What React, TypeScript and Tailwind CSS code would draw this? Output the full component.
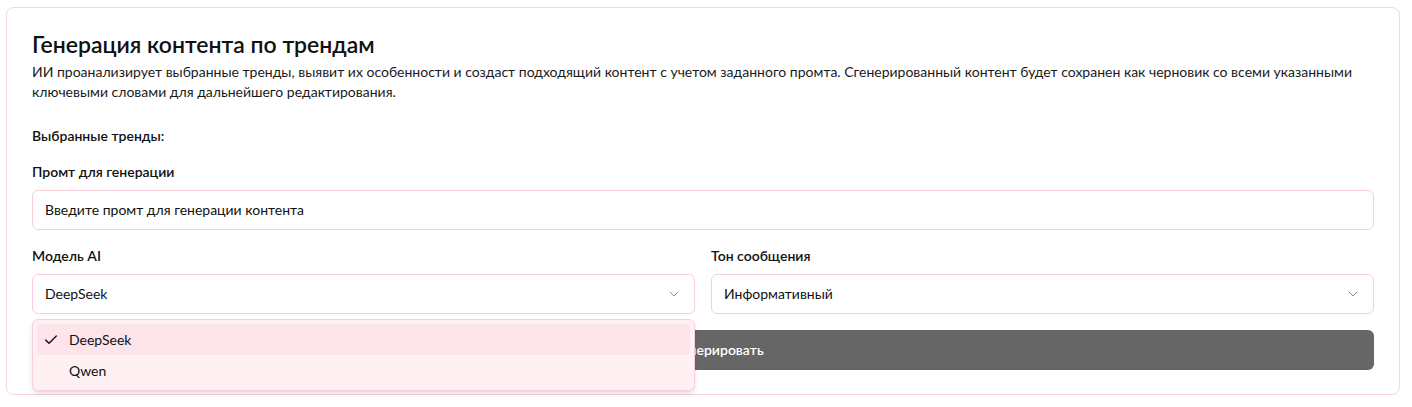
import { Check, ChevronDown, Sparkles } from 'lucide-react';

const font = { fontFamily: 'Lato, "Noto Sans", sans-serif' };

function Field({ label, children }: { label: string; children: React.ReactNode }) {
    return (
        <div className="flex flex-col gap-2">
            <div className="text-sm leading-5 font-semibold text-[#111]">{label}</div>
            {children}
        </div>
    );
}

function SelectBox({ value }: { value: string }) {
    return (
        <div className="flex h-10 items-center justify-between rounded-md border border-[#f9cfdc] bg-white px-3 text-sm text-[#111]">
            <span>{value}</span>
            <ChevronDown className="h-4 w-4 text-[#8a8a8a]" strokeWidth={1.5} />
        </div>
    );
}

export default function App() {
    return (
        <div className="min-h-screen bg-white pl-[6px] pt-[7px]" style={font}>
            <div className="w-[1394px] rounded-lg border border-[#f9d3df] bg-white px-[25px] pt-6 pb-6">
                <h2 className="mb-1.5 text-[23px] leading-6 font-semibold text-[#111]">Генерация контента по трендам</h2>
                <p className="text-sm leading-5 text-[#1a1a1a]">
                    ИИ проанализирует выбранные тренды, выявит их особенности и создаст подходящий контент с учетом заданного промта. Сгенерированный контент будет сохранен как черновик со всеми указанными ключевыми словами для дальнейшего редактирования.
                </p>

                <div className="mt-6 flex flex-col gap-4">
                    <div className="text-sm leading-5 font-semibold text-[#111]">Выбранные тренды:</div>

                    <Field label="Промт для генерации">
                        <div className="flex h-10 items-center rounded-md border border-[#f9cfdc] bg-white px-3 text-sm text-[#111]">
                            Введите промт для генерации контента
                        </div>
                    </Field>

                    <div className="grid grid-cols-2 gap-4">
                        <Field label="Модель AI">
                            <div className="relative">
                                <SelectBox value="DeepSeek" />
                                <div className="absolute top-[45px] left-0 z-10 w-full rounded-md border border-[#f9cfdc] bg-[#fff1f3] p-1 shadow-md">
                                    <div className="relative flex h-[31px] items-center rounded-sm bg-[#fde3ea] pl-8 text-sm text-[#111]">
                                        <Check className="absolute left-1.5 h-4 w-4" strokeWidth={2} />
                                        DeepSeek
                                    </div>
                                    <div className="flex h-[31px] items-center pl-8 text-sm text-[#111]">Qwen</div>
                                </div>
                            </div>
                        </Field>
                        <Field label="Тон сообщения">
                            <SelectBox value="Информативный" />
                        </Field>
                    </div>

                    <button className="flex h-10 items-center justify-center gap-2 rounded-md bg-[#666666] text-sm font-semibold text-white">
                        <Sparkles className="h-4 w-4" />
                        Сгенерировать
                    </button>
                </div>
            </div>
        </div>
    );
}
